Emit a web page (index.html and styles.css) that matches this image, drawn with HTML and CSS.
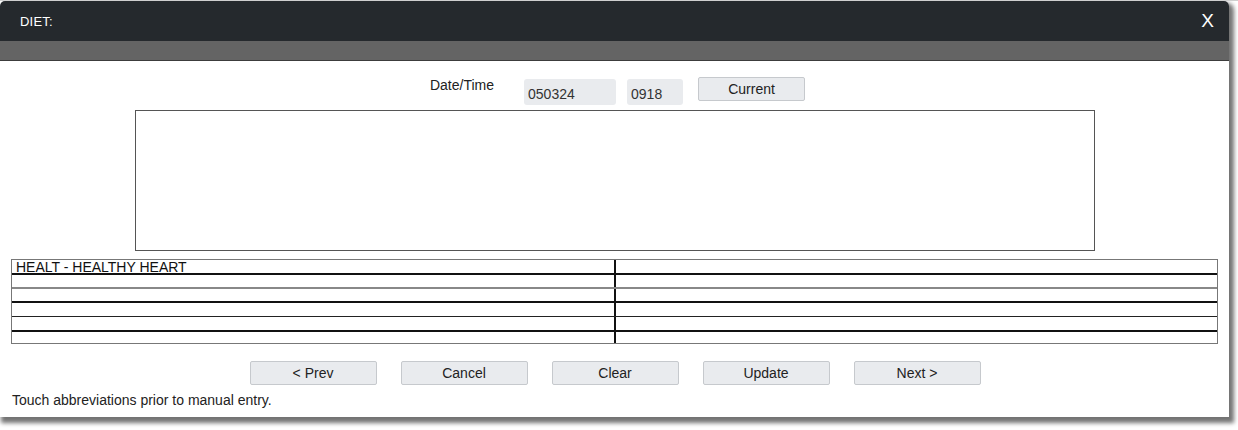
FILE: index.html
```html
<!DOCTYPE html>
<html lang="en">
<head>
    <meta charset="UTF-8">
    <meta name="viewport" content="width=device-width, initial-scale=1.0">
    <title>Diet</title>
    <link rel="stylesheet" href="styles.css">
</head>
<body>
    <div class="dialog">
        <div class="header">
            <span class="title">DIET:</span>
            <span class="close">X</span>
        </div>
        <div class="subbar"></div>

        <div class="content">
            <div class="datetime">
                <span class="label">Date/Time</span>
                <input class="field date" type="text" value="050324">
                <input class="field time" type="text" value="0918">
                <button class="button current">Current</button>
            </div>

            <div class="notes"></div>

            <div class="picklist">
                <div class="row r1"><div class="cell">HEALT - HEALTHY HEART</div><div class="cell"></div></div>
                <div class="row r2"><div class="cell"></div><div class="cell"></div></div>
                <div class="row r3"><div class="cell"></div><div class="cell"></div></div>
                <div class="row r4"><div class="cell"></div><div class="cell"></div></div>
                <div class="row r5"><div class="cell"></div><div class="cell"></div></div>
                <div class="row r6"><div class="cell"></div><div class="cell"></div></div>
            </div>

            <div class="actions">
                <button class="button nav">&lt; Prev</button>
                <button class="button nav">Cancel</button>
                <button class="button nav">Clear</button>
                <button class="button nav">Update</button>
                <button class="button nav">Next &gt;</button>
            </div>

            <p class="hint">Touch abbreviations prior to manual entry.</p>
        </div>
    </div>
</body>
</html>
```

FILE: styles.css
```css
html {
    background-color: #ffffff;
}
body {
    font-family: "Liberation Sans", Arial, sans-serif;
    margin: 0;
    min-height: 430px;
    border-top: 1px solid #cfcfcf;
}
.dialog {
    width: 1229px;
    height: 416px;
    background-color: #ffffff;
    border-radius: 5px 5px 0 0;
    box-shadow: 3px 4px 4px 2px rgba(0, 0, 0, 0.55);
}
.header {
    height: 40px;
    background-color: #25292d;
    color: white;
    display: flex;
    align-items: center;
    justify-content: space-between;
    padding: 0 15px 0 20px;
    border-radius: 5px 5px 0 0;
}
.title {
    font-size: 13px;
    letter-spacing: 0.2px;
}
.close {
    font-size: 19px;
}
.subbar {
    height: 19px;
    background-color: #646464;
    border-bottom: 1px solid #3c3c3c;
}
.content {
    padding: 16px 11px 0 11px;
}
.datetime {
    display: flex;
    justify-content: center;
    align-items: flex-start;
    height: 28px;
    padding-left: 6px;
}
.label {
    font-size: 14px;
    color: #222;
    margin-right: 30px;
}
.field {
    font-family: inherit;
    font-size: 14px;
    color: #333;
    background-color: #e9ebee;
    border: none;
    border-radius: 3px;
    height: 26px;
    padding: 4px 4px 0 4px;
    box-sizing: border-box;
    margin-top: 2px;
}
.date {
    width: 92px;
    margin-right: 11px;
}
.time {
    width: 56px;
    margin-right: 15px;
}
.button {
    font-family: inherit;
    font-size: 14px;
    color: #222;
    background-color: #e9ebee;
    border: 1px solid #c6c9cd;
    border-radius: 2px;
    height: 24px;
    padding: 0;
    cursor: pointer;
}
.current {
    width: 107px;
}
.notes {
    width: 958px;
    height: 139px;
    border: 1px solid #555;
    margin: 5px auto 0 auto;
}
.picklist {
    margin-top: 8px;
    border: 1px solid #777;
}
.row {
    display: flex;
    height: 13px;
}
.cell {
    flex: 1;
    font-size: 14px;
    line-height: 14px;
    color: #111;
    padding-left: 4px;
    white-space: nowrap;
}
.cell:first-child {
    border-right: 2px solid #111;
}
.r1 { border-bottom: 2px solid #111; }
.r2 { border-bottom: 2px solid #888; height: 12px; }
.r3 { border-bottom: 2px solid #111; height: 12px; }
.r4 { border-bottom: 1px solid #222; }
.r5 { border-bottom: 2px solid #111; }
.r6 { height: 11px; }
.actions {
    display: flex;
    justify-content: center;
    gap: 24px;
    margin-top: 17px;
    padding-left: 1px;
}
.nav {
    width: 127px;
}
.hint {
    font-size: 14px;
    color: #222;
    margin: 7px 0 0 1px;
}
```
